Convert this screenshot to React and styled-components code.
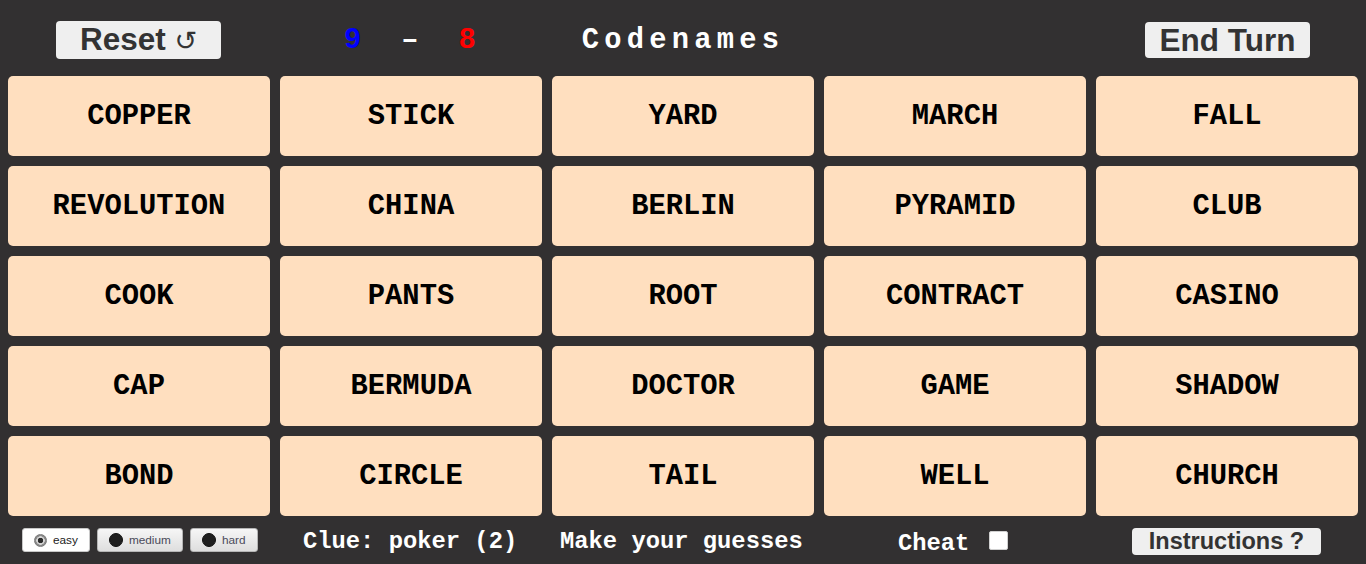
import styled, { createGlobalStyle } from 'styled-components'

const words = [
  'COPPER', 'STICK', 'YARD', 'MARCH', 'FALL',
  'REVOLUTION', 'CHINA', 'BERLIN', 'PYRAMID', 'CLUB',
  'COOK', 'PANTS', 'ROOT', 'CONTRACT', 'CASINO',
  'CAP', 'BERMUDA', 'DOCTOR', 'GAME', 'SHADOW',
  'BOND', 'CIRCLE', 'TAIL', 'WELL', 'CHURCH',
]

const levels = [
  { name: 'easy', checked: true },
  { name: 'medium', checked: false },
  { name: 'hard', checked: false },
]

function App() {
  return (
    <>
      <Global />
      <Page>
        <Header>
          <BigButton>Reset <Glyph>↺</Glyph></BigButton>
          <Score>
            <Num color="#0000ff">9</Num>
            <Num color="#ffffff">–</Num>
            <Num color="#ff0000">8</Num>
          </Score>
          <Title>Codenames</Title>
          <BigButton $push>End Turn</BigButton>
        </Header>

        <Board>
          {words.map((w) => (
            <Card key={w}>{w}</Card>
          ))}
        </Board>

        <Footer>
          <Levels>
            {levels.map((l) => (
              <Level key={l.name} $checked={l.checked}>
                <Dot $checked={l.checked} />
                {l.name}
              </Level>
            ))}
          </Levels>
          <Info>Clue: poker (2)</Info>
          <Info>Make your guesses</Info>
          <CheatLabel>
            Cheat
            <Check type="checkbox" />
          </CheatLabel>
          <HelpButton>Instructions ?</HelpButton>
        </Footer>
      </Page>
    </>
  )
}

export default App

const Global = createGlobalStyle`
  html, body {
    margin: 0;
    padding: 0;
    background: #323031;
  }
  * { box-sizing: border-box; }
`
const Page = styled.div`
  width: 1366px;
  height: 564px;
  background: #323031;
  display: flex;
  flex-direction: column;
  overflow: hidden;
`
const Header = styled.header`
  height: 76px;
  padding: 4px 56px 0;
  display: flex;
  align-items: center;
`
const BigButton = styled.button`
  width: 165px;
  margin-left: ${(p) => (p.$push ? 'auto' : '0')};
  padding: 0;
  border: none;
  border-radius: 4px;
  background: #efefef;
  color: #333;
  font-family: "Liberation Sans", Arial, sans-serif;
  font-weight: 700;
  font-size: 31.5px;
  line-height: 36px;
  cursor: pointer;
`
const Glyph = styled.span`
  font-weight: 400;
  font-family: "DejaVu Sans", sans-serif;
  font-size: 27px;
`
const Score = styled.div`
  display: flex;
  gap: 40px;
  margin-left: 123px;
`
const Num = styled.span`
  color: ${(p) => p.color};
  font-family: "Liberation Mono", "Courier New", monospace;
  font-weight: 700;
  font-size: 28.8px;
`
const Title = styled.h1`
  margin: 0 0 0 106px;
  color: #fff;
  font-family: "Liberation Mono", "Courier New", monospace;
  font-weight: 700;
  font-size: 28.8px;
  letter-spacing: 5.2px;
`
const Board = styled.main`
  display: grid;
  grid-template-columns: repeat(5, 1fr);
  grid-auto-rows: 80px;
  gap: 10px;
  padding: 0 8px;
`
const Card = styled.div`
  display: flex;
  align-items: center;
  justify-content: center;
  background: #ffdfbf;
  border-radius: 5px;
  color: #000;
  font-family: "Liberation Mono", "Courier New", monospace;
  font-weight: 700;
  font-size: 28.8px;
`
const Footer = styled.footer`
  height: 48px;
  padding-left: 22px;
  display: grid;
  grid-template-columns: 281px 257px 338px 234px auto;
  align-items: center;
`
const Levels = styled.div`
  display: flex;
  gap: 7px;
`
const Level = styled.label`
  height: 24px;
  padding: 0 11px;
  display: flex;
  align-items: center;
  gap: 6px;
  border: 1px solid ${(p) => (p.$checked ? '#c8c8c8' : '#b5b5b5')};
  border-radius: 3px;
  background: ${(p) => (p.$checked ? '#fff' : 'linear-gradient(#f6f6f6, #dedede)')};
  color: ${(p) => (p.$checked ? '#222' : '#4a4a5a')};
  font-family: "Liberation Sans", Arial, sans-serif;
  font-size: 11.8px;
`
const Dot = styled.span`
  flex: none;
  width: ${(p) => (p.$checked ? '13px' : '14px')};
  height: ${(p) => (p.$checked ? '13px' : '14px')};
  border-radius: 50%;
  background: ${(p) =>
    p.$checked
      ? 'radial-gradient(circle, #2b2b2b 0 2.5px, #d4d4d4 3px 4px, #8a8a8a 4.5px)'
      : '#1f1f1f'};
  border: 1px solid ${(p) => (p.$checked ? '#7a7a7a' : '#111')};
`
const Info = styled.span`
  padding-top: 2px;
  color: #fff;
  font-family: "Liberation Mono", "Courier New", monospace;
  font-weight: 700;
  font-size: 23.8px;
  white-space: pre;
`
const CheatLabel = styled.label`
  display: flex;
  align-items: baseline;
  gap: 20px;
  padding-top: 7px;
  color: #fff;
  font-family: "Liberation Mono", "Courier New", monospace;
  font-weight: 700;
  font-size: 23.8px;
`
const Check = styled.input`
  appearance: none;
  width: 19px;
  height: 19px;
  margin: 0;
  border: 1px solid #d0d0d0;
  border-radius: 2px;
  background: #fff;
`
const HelpButton = styled.button`
  justify-self: start;
  width: 189px;
  height: 27px;
  margin-top: 2px;
  padding: 0;
  border: none;
  border-radius: 4px;
  background: #efefef;
  color: #333;
  font-family: "Liberation Sans", Arial, sans-serif;
  font-weight: 700;
  font-size: 23.5px;
  line-height: 27px;
`
